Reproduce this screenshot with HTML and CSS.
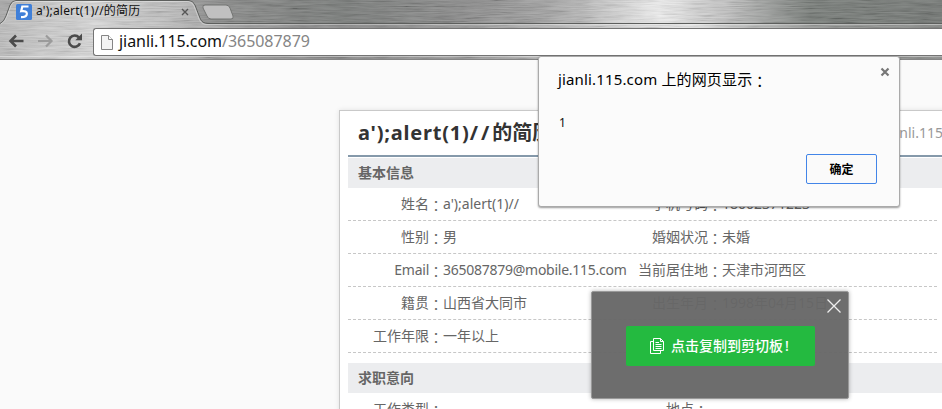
FILE: index.html
```html
<!DOCTYPE html>
<html lang="zh-CN">
<head>
<meta charset="utf-8">
<title>a');alert(1)//的简历</title>
<link rel="stylesheet" href="styles.css">
</head>
<body>
<div class="window">
  <header class="chrome">
    <svg class="metal" width="942" height="60" aria-hidden="true">
      <defs>
        <filter id="brushed" x="0" y="0" width="100%" height="100%">
          <feTurbulence type="fractalNoise" baseFrequency="0.035 0.8" numOctaves="3" seed="4"/>
          <feColorMatrix values="1.6 0 0 0 -0.22  1.6 0 0 0 -0.22  1.6 0 0 0 -0.22  0 0 0 0 .17"/>
        </filter>
        <linearGradient id="strip">
          <stop offset="0" stop-color="#a4a4a4"/><stop offset=".08" stop-color="#b8b8b8"/><stop offset=".17" stop-color="#a8a8a8"/>
          <stop offset=".23" stop-color="#828382"/><stop offset=".36" stop-color="#6f7270"/><stop offset=".5" stop-color="#858585"/>
          <stop offset=".58" stop-color="#9b9b9b"/><stop offset=".65" stop-color="#cbcbcb"/><stop offset=".7" stop-color="#ececec"/>
          <stop offset=".77" stop-color="#bdbdbd"/><stop offset=".86" stop-color="#6e736f"/><stop offset="1" stop-color="#6b6f6c"/>
        </linearGradient>
        <linearGradient id="bar">
          <stop offset="0" stop-color="#b8b8b8"/><stop offset=".1" stop-color="#d4d4d4"/><stop offset=".18" stop-color="#b8b8b8"/>
          <stop offset=".25" stop-color="#989898"/><stop offset=".36" stop-color="#808080"/><stop offset=".5" stop-color="#949494"/>
          <stop offset=".66" stop-color="#d0d0d0"/><stop offset=".72" stop-color="#e6e6e6"/><stop offset=".87" stop-color="#8c8e8c"/><stop offset="1" stop-color="#808280"/>
        </linearGradient>
      </defs>
      <rect width="942" height="24" fill="url(#strip)"/>
      <path d="M0 24C4 22 5 20 7 15L11 4Q12 0 16 0H189Q193 0 195 4L201 19Q203 24 208 24H942V60H0Z" fill="url(#bar)"/>
      <rect width="942" height="60" filter="url(#brushed)"/>
      <path d="M0 23.500Q4 22 6 16L10 5Q12 .5 16 .5H189Q193 .5 195 5L200 18Q202 23.500 208 23.500H942" fill="none" stroke="#5d5f5d"/>
      <path d="M1 24Q5 22 7 16L11 5.500Q13 1.500 16 1.500H188Q192 1.500 194 6L199 19Q201 24.500 207 24.500H942" fill="none" stroke="#fff" stroke-opacity=".35"/>
      <path d="M203 8Q202 5 205 5H226Q229 5 230 8L233 16Q234 19 231 19H211Q208 19 207 16Z" fill="#c0c0c0" stroke="#727472"/>
      <path d="M0 59.500H942" stroke="#858585"/>
      <path d="M0 56.500H942" stroke="#fff" stroke-opacity=".4"/>
    </svg>
    <div class="tab">
      <svg class="favicon" viewBox="0 0 16 16"><rect width="16" height="16" rx="1.500" fill="#3f7fd8"/><path d="M12.500 2.500H6.300L5.200 7.200Q10.900 6.400 10.900 9.700 10.800 13.200 5 13.200" fill="none" stroke="#fff" stroke-width="2.200"/></svg>
      <span class="tab-title">a');alert(1)//的简历</span>
      <svg class="tab-close" viewBox="0 0 8 8"><path d="M1 1L7 7M7 1L1 7" stroke="#555" stroke-width="1.400"/></svg>
    </div>
    <div class="toolbar">
      <svg class="nav" viewBox="0 0 84 20">
        <path d="M17.500 10H5M10 4.500L4.500 10L10 15.500" fill="none" stroke="#4b4b4b" stroke-width="2.600"/>
        <path d="M32 10H45M40 4.500L45.500 10L40 15.500" fill="none" stroke="#9b9b9b" stroke-width="2.200"/>
        <path d="M73 6.500A5.700 5.700 0 1 0 74 12.200" fill="none" stroke="#4b4b4b" stroke-width="2.600"/>
        <path d="M76 2.500V9.200H69.300Z" fill="#4b4b4b"/>
      </svg>
      <div class="address">
        <svg class="page-icon" viewBox="0 0 12 15"><path d="M.5.5H7.500L11.500 4.500V14.500H.5Z" fill="#f4f4f4" stroke="#858585"/><path d="M7.500.5V4.500H11.500" fill="#fff" stroke="#858585"/></svg>
        <span class="url">jianli.115.com<span class="path">/365087879</span></span>
      </div>
    </div>
  </header>

  <main class="page">
    <article class="resume">
      <div class="resume-head"><h1><span class="name">a');alert(1)<span class="slashes">//</span></span>的简历</h1><span class="site">jianli.115.com</span></div>
      <h2>基本信息</h2>
      <dl class="row"><dt>姓名<i>：</i></dt><dd>a');alert(1)//</dd><dt>手机号码<i>：</i></dt><dd>18002371223</dd></dl>
      <dl class="row"><dt>性别<i>：</i></dt><dd>男</dd><dt>婚姻状况<i>：</i></dt><dd>未婚</dd></dl>
      <dl class="row"><dt><span class="latin">Email</span><i>：</i></dt><dd class="latin">365087879@mobile.115.com</dd><dt>当前居住地<i>：</i></dt><dd>天津市河西区</dd></dl>
      <dl class="row"><dt>籍贯<i>：</i></dt><dd>山西省大同市</dd><dt>出生年月<i>：</i></dt><dd>1998年04月15日</dd></dl>
      <dl class="row"><dt>工作年限<i>：</i></dt><dd>一年以上</dd></dl>
      <h2 class="next">求职意向</h2>
      <dl class="row"><dt>工作类型<i>：</i></dt><dd></dd><dt class="place">地点<i>：</i></dt><dd></dd></dl>
    </article>
  </main>

  <section class="dialog">
    <div class="dialog-head"><span class="dialog-title">jianli.115.com 上的网页显示<i>：</i></span>
      <svg class="dialog-close" viewBox="0 0 10 10"><path d="M1.500 1.500L8.500 8.500M8.500 1.500L1.500 8.500" stroke="#777" stroke-width="2.200"/></svg>
    </div>
    <p>1</p>
    <button class="ok">确定</button>
  </section>

  <section class="clip">
    <svg class="clip-close" viewBox="0 0 14 14"><path d="M.5.5L13.500 13.500M13.500.5L.5 13.500" stroke="#eee" stroke-width="1.300"/></svg>
    <button class="copy">
      <svg class="copy-icon" viewBox="0 0 14 16"><path d="M3.500.5H10.500L13.500 3.500V12.500H3.500ZM10.500.5V3.500H13.500M3 3.500H.5V15.500H10.500V13M5.500 4.500H9M5.500 6.500H11.500M5.500 8.500H11.500M5.500 10.500H11.500" fill="none" stroke="#fff"/></svg>
      <span>点击复制到剪切板</span><span class="bang">!</span>
    </button>
  </section>
</div>
</body>
</html>
```
FILE: styles.css
```css
* { box-sizing: border-box; }
body { margin: 0; font-family: "Noto Sans", "Noto Sans CJK SC", sans-serif; }
h1, h2, p, dl, dt, dd { margin: 0; }
i { font-style: normal; font-family: "Noto Sans CJK TC", sans-serif; font-feature-settings: "locl" 0; line-height: 0; vertical-align: -2px; }
button { font-family: inherit; padding: 0; margin: 0; }
svg { display: block; flex: none; }
.window { position: relative; width: 942px; height: 409px; overflow: hidden; background: #fafafa; }
.chrome { position: relative; height: 60px; overflow: hidden; }
.metal { position: absolute; inset: 0; }
.tab { position: relative; display: flex; align-items: center; width: 190px; height: 24px; padding-left: 16px; }
.favicon { width: 16px; height: 16px; }
.tab-title { width: 145px; margin: -2px 0 0 4px; font-size: 12px; letter-spacing: .2px; line-height: 22px; color: #111; white-space: nowrap; }
.tab-close { width: 8px; height: 8px; }
.toolbar { position: relative; display: flex; height: 36px; padding-top: 4px; }
.nav { width: 84px; height: 20px; margin: 3px 3px 0 6px; }
.address { display: flex; align-items: center; flex: 1; height: 28px; padding-left: 7px; background: #fff; border: 1px solid #747474; border-right: 0; border-radius: 3px 0 0 3px; }
.page-icon { width: 12px; height: 15px; }
.url { margin: -2px 0 0 6px; font-size: 16px; letter-spacing: -.05px; line-height: 24px; color: #111; white-space: nowrap; }
.path { color: #858585; }

.page { padding: 50px 0 0 339px; }
.resume { width: 640px; height: 400px; padding: 0 8px; background: #fff; border: 1px solid #c9c9c9; box-shadow: 0 0 5px rgba(0,0,0,.1); }
.resume-head { display: flex; justify-content: space-between; height: 46px; margin-bottom: 1px; padding-left: 10px; border-bottom: 2px solid #8599aa; }
h1 { font-size: 20px; line-height: 44px; color: #333; white-space: nowrap; }
.name { letter-spacing: .8px; }
.slashes { letter-spacing: 3px; }
.site { margin-right: -5px; font-size: 14px; line-height: 44px; color: #999; }
h2 { height: 30px; padding-left: 10px; background: #ecedef; font-size: 14px; line-height: 30px; color: #666; }
h2.next { margin-top: 10px; }
.row { display: grid; grid-template-columns: 95px 184px 95px 1fr; width: 589px; height: 33px; border-bottom: 1px dashed #c7c7c7; font-size: 14px; line-height: 31px; color: #666; white-space: nowrap; }
.row dt { text-align: right; }
.row .place { padding-right: 14px; }
.latin { letter-spacing: -.26px; }

.dialog { position: absolute; left: 538px; top: 56px; width: 362px; height: 151px; padding: 10px 22px 0 19px; background: #fbfbfb; border: 1px solid #aaa; border-radius: 3px; box-shadow: 0 1px 2px rgba(0,0,0,.4); }
.dialog-head { display: flex; justify-content: space-between; height: 24px; }
.dialog-title { font-size: 15px; letter-spacing: .15px; line-height: 24px; color: #000; white-space: nowrap; }
.dialog-close { width: 10px; height: 10px; margin: 0 -13px 0 0; }
.dialog p { margin: 22px 0 0 1px; font-size: 12px; line-height: 20px; color: #111; }
.ok { display: block; width: 71px; height: 30px; margin: 21px 0 0 auto; border: 1px solid #4285e8; border-radius: 2px; background: #fafafa; font-size: 12px; font-weight: 700; color: #000; }

.clip { position: absolute; left: 591px; top: 291px; width: 258px; height: 108px; padding: 34px; background: rgba(103,103,103,.96); border: 1px solid #999; border-radius: 2px; box-shadow: 0 0 4px rgba(0,0,0,.3); }
.clip-close { position: absolute; right: 7px; top: 7px; width: 14px; height: 14px; }
.copy { display: flex; align-items: center; width: 189px; height: 40px; padding-left: 24px; border: 0; border-radius: 2px; background: #24ba40; color: #fff; font-size: 14px; font-weight: 500; white-space: nowrap; }
.copy span { margin-top: -2px; }
.copy-icon { width: 14px; height: 16px; margin-right: 7px; }
.copy .bang { margin-left: 2px; }
```
